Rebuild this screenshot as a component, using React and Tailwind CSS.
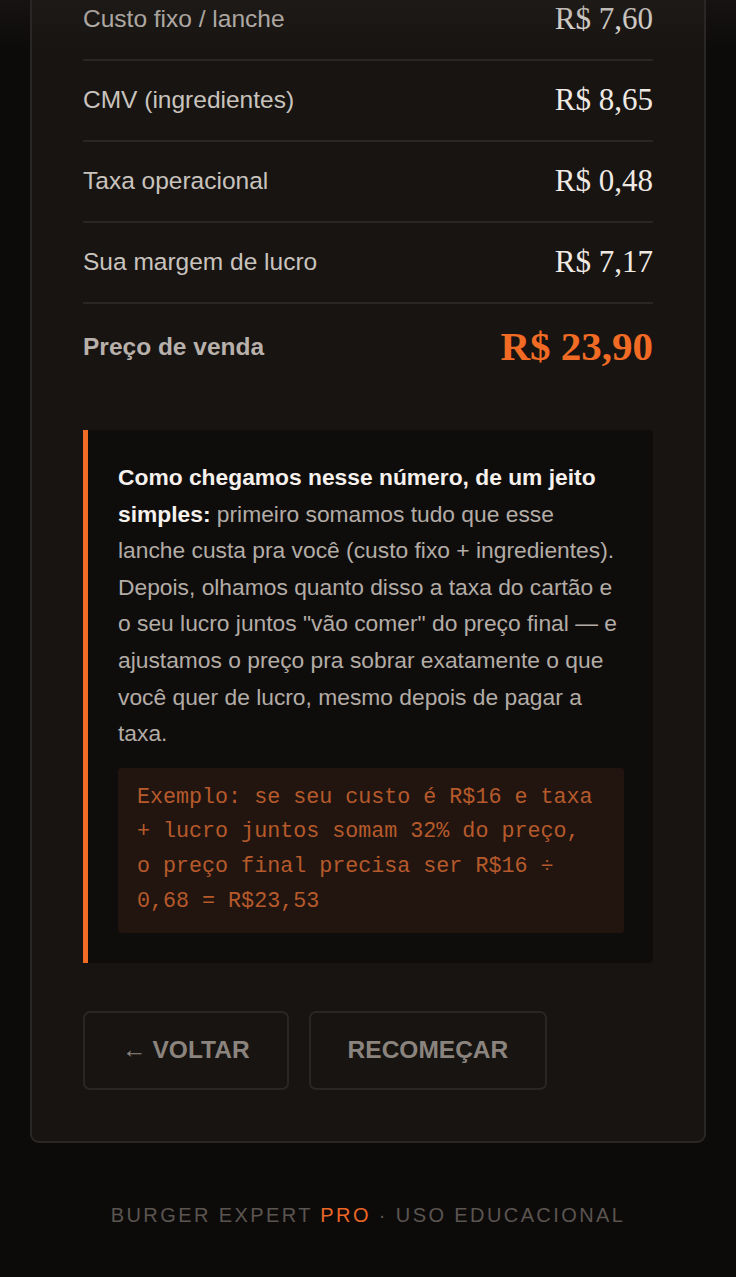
import React from 'react';

const rows = [
    { label: 'Custo fixo / lanche', value: 'R$ 7,60' },
    { label: 'CMV (ingredientes)', value: 'R$ 8,65' },
    { label: 'Taxa operacional', value: 'R$ 0,48' },
    { label: 'Sua margem de lucro', value: 'R$ 7,17' },
];

const sans = { fontFamily: '"Liberation Sans", Arial, sans-serif' };

export default function App() {
    return (
        <div className="relative min-h-[1277px] bg-[#0d0b0a] overflow-hidden" style={sans}>
            {/* top fade from the scrolled header */}
            <div className="pointer-events-none absolute inset-x-0 top-0 h-[50px] bg-gradient-to-b from-[#2a2624]/30 to-transparent z-10" />

            <div className="px-[30px]">
                <div className="-mt-[20px] rounded-b-[9px] border-2 border-t-0 border-[#2a2624] bg-[#171412] px-[51px] pb-[51px]">
                    {/* breakdown */}
                    <div>
                        {rows.map((row) => (
                            <div
                                key={row.label}
                                className="flex h-[81px] items-center justify-between border-b-2 border-[#2a2624]"
                            >
                                <span className="text-[24.5px] text-[#c9c3bd]">{row.label}</span>
                                <span className="font-['Liberation_Serif',serif] text-[31px] text-[#efe9e3]">
                                    {row.value}
                                </span>
                            </div>
                        ))}
                        <div className="flex h-[86px] items-center justify-between">
                            <span className="text-[24.5px] font-bold text-[#b8b1ab]">Preço de venda</span>
                            <span className="font-['Liberation_Serif',serif] text-[41px] font-bold text-[#f26b24]">
                                R$ 23,90
                            </span>
                        </div>
                    </div>

                    {/* explanation */}
                    <div className="mt-[40px] rounded-r-[4px] border-l-[5px] border-[#f26b24] bg-[#0f0d0c] pl-[30px] pr-[33px] pt-[29px] pb-[30px]">
                        <p className="text-[22.8px] leading-[36.6px] text-[#b3aca6]">
                            <strong className="font-bold text-[#f6f1ec]">
                                Como chegamos nesse número, de um jeito simples:
                            </strong>{' '}
                            primeiro somamos tudo que esse lanche custa pra você (custo fixo + ingredientes).
                            Depois, olhamos quanto disso a taxa do cartão e o seu lucro juntos "vão comer" do
                            preço final — e ajustamos o preço pra sobrar exatamente o que você quer de lucro,
                            mesmo depois de pagar a taxa.
                        </p>
                        <div className="-mr-[4px] mt-[16px] rounded-[4px] bg-[#221510] px-[19px] py-[13px]">
                            <p className="font-['Liberation_Mono',monospace] text-[21.7px] leading-[34.7px] text-[#b65a2b]">
                                Exemplo: se seu custo é R$16 e taxa + lucro juntos somam 32% do preço, o preço
                                final precisa ser R$16 ÷ 0,68 = R$23,53
                            </p>
                        </div>
                    </div>

                    {/* actions */}
                    <div className="mt-[48px] flex gap-[20px]">
                        <button className="flex h-[79px] items-center rounded-[7px] border-2 border-[#2a2624] px-[37px] text-[24.5px] font-bold uppercase text-[#8b847e]">
                            <span className="mr-[6px] font-normal">←</span>VOLTAR
                        </button>
                        <button className="flex h-[79px] items-center rounded-[7px] border-2 border-[#2a2624] px-[37px] text-[24.5px] font-bold uppercase text-[#8b847e]">
                            RECOMEÇAR
                        </button>
                    </div>
                </div>
            </div>

            <footer className="mt-[57px] text-center text-[20px] tracking-[0.12em] text-[#5b5551]">
                BURGER EXPERT <span className="text-[#ea6626]">PRO</span> · USO EDUCACIONAL
            </footer>
        </div>
    );
}
